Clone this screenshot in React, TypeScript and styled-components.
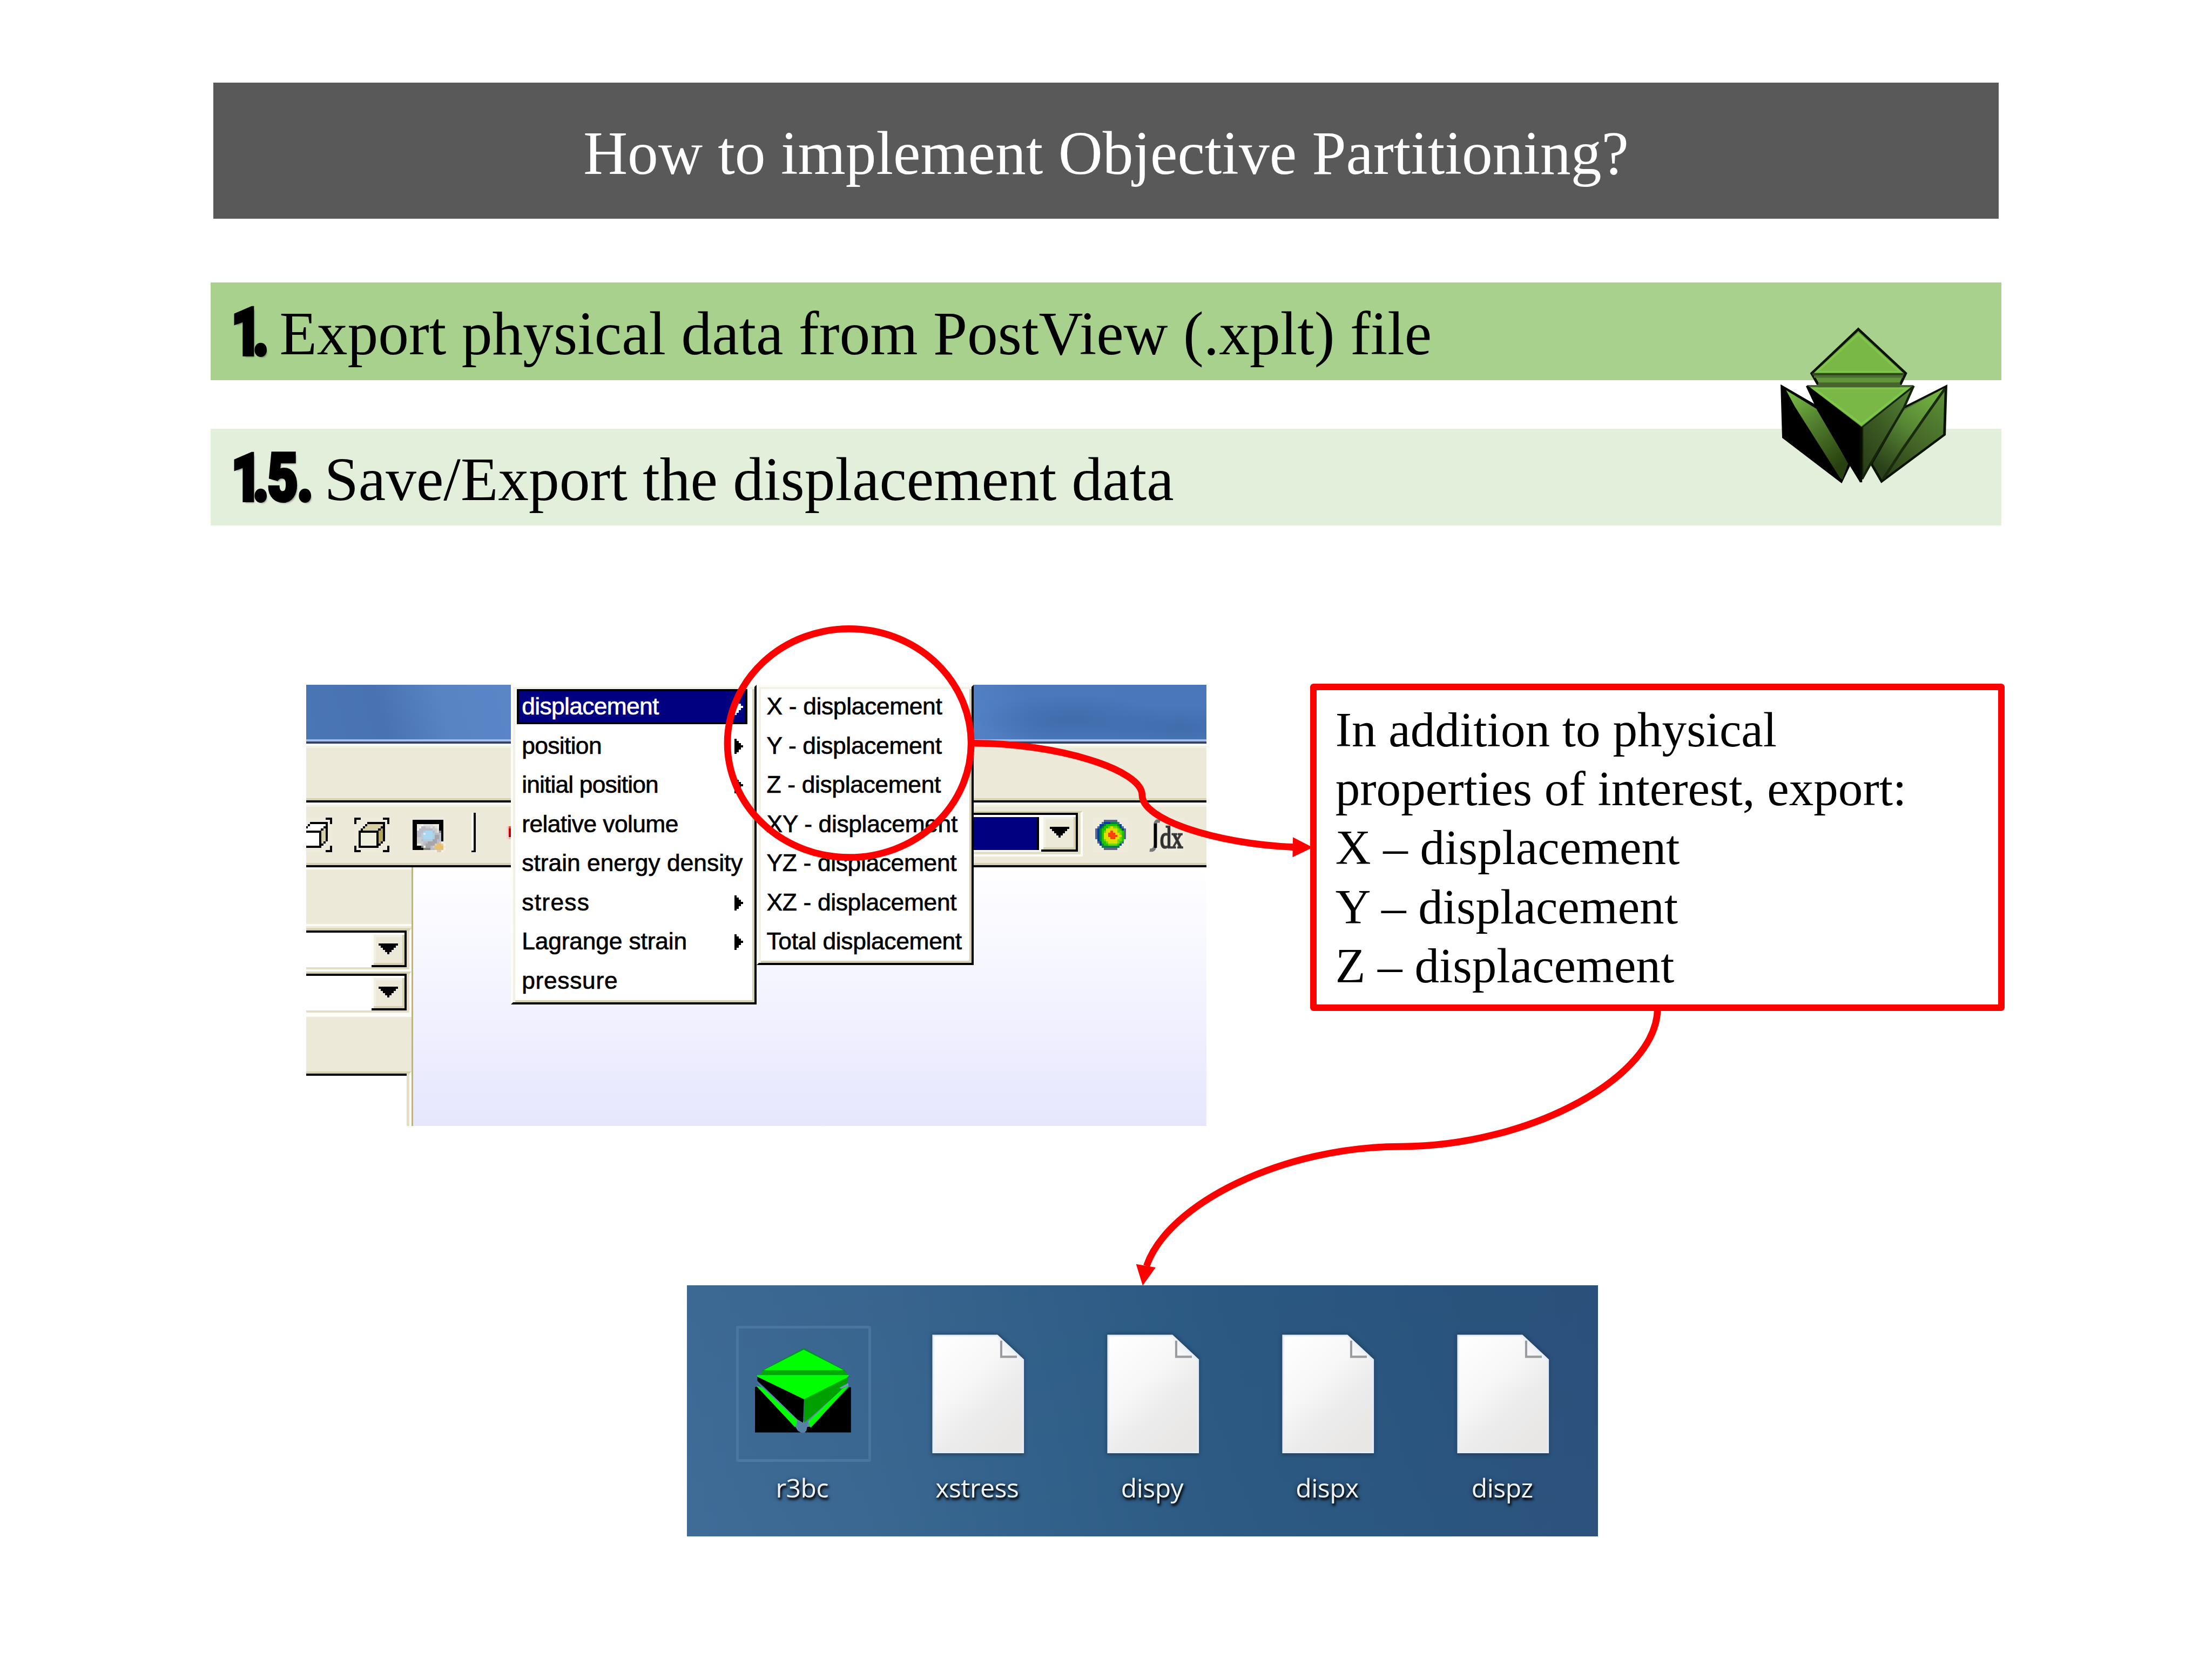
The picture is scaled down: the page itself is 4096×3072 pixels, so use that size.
import React from "react";
import styled, { createGlobalStyle } from "styled-components";

/* The slide is authored on a 6000 x 4500 grid and shown in a 4096px wide window. */
const u = (n: number) => `${Math.round(((n * 4096) / 6000) * 100) / 100}px`;

const RED = "#ff0000";
const FACE = "#ece9d8";
const TAN = "#d8d1b0";
const PALE = "#f3f1e5";

const Global = createGlobalStyle`
  html, body { margin: 0; background: #fff; }
`;

const Slide = styled.main`
  position: relative;
  box-sizing: border-box;
  width: ${u(6000)};
  height: ${u(4500)};
  padding: ${u(224)} ${u(571.5)} 0;
  overflow: hidden;
  background: #fff;
  color: #000;
  font-family: "Liberation Serif", "Times New Roman", serif;
  display: flex;
  flex-direction: column;
`;

const Title = styled.h1`
  box-sizing: border-box;
  height: ${u(369)};
  margin: 0 ${u(7.5)};
  padding-top: ${u(17)};
  background: #595959;
  color: #fff;
  font-size: ${u(166.3)};
  font-weight: 400;
  display: flex;
  align-items: center;
  justify-content: center;
  white-space: nowrap;
`;

const Step = styled.section<{ $tone: string; $gap: number; $height: number }>`
  box-sizing: border-box;
  height: ${(p) => u(p.$height)};
  margin-top: ${(p) => u(p.$gap)};
  padding: ${u(16)} 0 0 ${u(56)};
  background: ${(p) => p.$tone};
  font-size: ${u(166.3)};
  display: flex;
  align-items: center;
  white-space: nowrap;
`;

const StepNumber = styled.span<{ $width: number }>`
  width: ${(p) => u(p.$width)};
  flex: none;
  font-family: Roboto, "Liberation Sans", sans-serif;
  font-weight: 900;
  font-size: ${u(179)};
  line-height: 1;
  -webkit-text-stroke: ${u(9)} #000;
  text-shadow: ${u(5)} ${u(6)} ${u(5)} rgba(0, 0, 0, 0.4);
  transform-origin: 0 50%;
  transform: translateY(${u(-4)}) scaleX(0.8);
`;

const Glyph = styled.span<{ $track: number }>`
  letter-spacing: ${(p) => u(p.$track)};
`;

const Row = styled.div`
  display: flex;
  align-items: flex-start;
  margin: ${u(429.8)} ${u(-9)} 0 ${u(259.2)};
`;

/* ---------- PostView window ---------- */

const Window = styled.div`
  position: relative;
  width: ${u(2441.5)};
  height: ${u(1196.4)};
  margin-top: ${u(3)};
  flex: none;
  overflow: hidden;
  display: flex;
  flex-direction: column;
  font-family: "Liberation Sans", Arial, sans-serif;
`;

const TitleBar = styled.div`
  box-sizing: border-box;
  height: ${u(159)};
  flex: none;
  border-bottom: ${u(6)} solid #344468;
  box-shadow: inset 0 ${u(-6)} 0 #a9bfe2;
  background:
    radial-gradient(ellipse ${u(260)} ${u(70)} at 85% 62%, rgba(56, 100, 160, 0.6), transparent),
    radial-gradient(ellipse ${u(240)} ${u(60)} at 97% 75%, rgba(56, 100, 160, 0.55), transparent),
    linear-gradient(75deg, #4b76b6 0, #4872b2 9%, #5984c4 16%, #5a85c6 24%, #5280c4 74%, #4b78bc 80%, #4a77bb 100%);
`;

const MenuBar = styled.div`
  box-sizing: border-box;
  height: ${u(159.5)};
  flex: none;
  background: ${FACE};
  border-top: ${u(6)} solid #fdfdf8;
  border-bottom: ${u(6)} solid #000;
  box-shadow: inset 0 ${u(6)} 0 ${PALE}, inset 0 ${u(-6)} 0 ${TAN};
`;

const ToolBar = styled.div`
  box-sizing: border-box;
  height: ${u(176.7)};
  flex: none;
  background: ${FACE};
  border-top: ${u(6)} solid #fdfdf8;
  border-bottom: ${u(6)} solid #000;
  box-shadow: inset 0 ${u(6)} 0 ${PALE}, inset 0 ${u(-6)} 0 ${TAN};
  display: flex;
  align-items: flex-start;
  justify-content: space-between;
`;

const ToolGroup = styled.div<{ $indent?: number; $tail?: number }>`
  display: flex;
  align-items: flex-start;
  margin-left: ${(p) => u(p.$indent ?? 0)};
  padding-right: ${(p) => u(p.$tail ?? 0)};
`;

const PixelIcon = styled.svg<{ $left: number }>`
  display: block;
  width: ${u(95.2)};
  height: ${u(94)};
  margin: ${u(35)} 0 0 ${(p) => u(p.$left)};
  background: #eeebdd;
  overflow: visible;
`;

const Separator = styled.div`
  box-sizing: border-box;
  width: ${u(11)};
  height: ${u(106)};
  margin: ${u(23)} 0 0 ${u(70.5)};
  background: #fdfdf8;
  border-right: ${u(6)} solid #000;
  border-bottom: ${u(5)} solid #000;
`;

const RedTip = styled.div`
  box-sizing: border-box;
  width: ${u(12)};
  height: ${u(35)};
  margin: ${u(59)} 0 0 ${u(83)};
  background: linear-gradient(#e85030 0 18%, #c80000 18% 55%, #b40000 55% 84%, #d4c0bc 84%);
  border-left: ${u(6)} solid #f3d2d0;
`;

const ToolCombo = styled.div`
  box-sizing: border-box;
  width: ${u(295)};
  height: ${u(123)};
  margin-top: ${u(18)};
  border-top: ${u(5)} solid ${TAN};
  border-right: ${u(6)} solid #fdfdf8;
  border-bottom: ${u(6)} solid #fdfdf8;
  background: #e3dec8;
  display: flex;
`;

const ComboBody = styled.div<{ $width: number; $height: number }>`
  box-sizing: border-box;
  width: ${(p) => u(p.$width)};
  height: ${(p) => u(p.$height)};
  border-top: ${u(6)} solid #000;
  background: #fff;
  display: flex;
  justify-content: flex-end;
`;

const Selection = styled.div`
  box-sizing: border-box;
  flex: 1;
  margin: ${u(6)} ${u(6)} ${u(5)} 0;
  background: #000080;
  border-right: ${u(6)} solid #000;
`;

const DropButton = styled.div<{ $width: number }>`
  box-sizing: border-box;
  width: ${(p) => u(p.$width)};
  border-right: ${u(6)} solid #000;
  border-bottom: ${u(6)} solid #000;
  background: ${FACE};
  box-shadow: inset ${u(6)} ${u(6)} 0 #fdfdf8, inset ${u(-6)} ${u(-6)} 0 ${TAN}, inset ${u(12)} ${u(12)} 0 ${PALE};
  display: flex;
  align-items: center;
  justify-content: center;
`;

const DownMark = styled.svg`
  display: block;
  width: ${u(53)};
  height: ${u(29.5)};
  margin-left: ${u(4)};
`;

const Workspace = styled.div`
  flex: 1;
  display: flex;
  min-height: 0;
`;

const SideBar = styled.div`
  box-sizing: border-box;
  width: ${u(289.6)};
  flex: none;
  border-right: ${u(5.5)} solid #bcb487;
  background: ${FACE};
  display: flex;
  flex-direction: column;
`;

const SideBlank = styled.div<{ $height: number }>`
  box-sizing: border-box;
  height: ${(p) => u(p.$height)};
  flex: none;
  border-top: ${u(6)} solid #fdfdf8;
`;

const SideField = styled.div`
  box-sizing: border-box;
  height: ${u(117.2)};
  flex: none;
  background: #e3dec8;
  border-right: ${u(6)} solid #fdfdf8;
  border-top: ${u(6)} solid ${TAN};
  border-bottom: ${u(6)} solid #fdfdf8;
`;

const SideList = styled.div`
  box-sizing: border-box;
  flex: 1;
  background: #fff;
  border-top: ${u(6)} solid ${TAN};
  border-right: ${u(6)} solid #fdfdf8;
  display: flex;
`;

const SideListFill = styled.div`
  flex: 1;
  border-top: ${u(6)} solid #000;
`;

const SideListEdge = styled.div`
  width: ${u(6.5)};
  background: #e3dec8;
`;

const Viewport = styled.div`
  flex: 1;
  background: linear-gradient(#ffffff 0, #fdfdff 8%, #f3f3ff 50%, #e6e6fe 100%);
`;

const Menu = styled.ul<{ $left: number; $width: number; $height: number }>`
  position: absolute;
  top: 0;
  left: ${(p) => u(p.$left)};
  box-sizing: border-box;
  width: ${(p) => u(p.$width)};
  height: ${(p) => u(p.$height)};
  margin: 0;
  padding: 0;
  list-style: none;
  background: #fff;
  border-style: solid;
  border-width: ${u(6)};
  border-color: #fdfdf8 #000 #000 #fdfdf8;
  box-shadow: inset ${u(6)} ${u(6)} 0 ${PALE}, inset ${u(-6)} ${u(-6)} 0 ${TAN};
`;

const MenuItem = styled.li<{ $active?: boolean; $pad: number; $track: number }>`
  box-sizing: border-box;
  height: ${u(94.8)};
  margin: ${u(6)} ${u(18.5)} ${u(11.4)} ${u(10.7)};
  padding: 0 ${u(6)} ${u(1.5)} ${(p) => u(p.$pad)};
  border: ${u(6)} solid ${(p) => (p.$active ? "#000" : "transparent")};
  background: ${(p) => (p.$active ? "#000080" : "transparent")};
  background-clip: padding-box;
  color: ${(p) => (p.$active ? "#fff" : "#000")};
  font-size: ${u(65)};
  letter-spacing: ${(p) => u(p.$track)};
  -webkit-text-stroke: ${u(1)} currentColor;
  display: flex;
  align-items: center;
  justify-content: space-between;
  white-space: nowrap;
  & + & { margin-top: 0; }
`;

const SubMark = styled.svg`
  display: block;
  flex: none;
  width: ${u(23)};
  height: ${u(42)};
  margin-top: ${u(4)};
`;

/* ---------- Note ---------- */

const Note = styled.div`
  box-sizing: border-box;
  width: ${u(1884.5)};
  height: ${u(887.2)};
  margin-left: auto;
  flex: none;
  padding: ${u(27)} 0 0 ${u(51.5)};
  border: ${u(19)} solid ${RED};
  border-radius: ${u(9)};
  background: #fff;
  font-size: ${u(133.5)};
  line-height: ${u(160.2)};
  white-space: nowrap;
`;

/* ---------- Desktop ---------- */

const Desktop = styled.div`
  box-sizing: border-box;
  width: ${u(2470.8)};
  height: ${u(681)};
  margin: ${u(431.7)} 0 0 ${u(1291.7)};
  padding-left: ${u(77)};
  flex: none;
  display: flex;
  background:
    linear-gradient(180deg, rgba(40, 80, 120, 0.12), rgba(70, 120, 160, 0.06)),
    linear-gradient(97deg, #3f6c98 0, #3a6791 22%, #31608a 40%, #2b5982 58%, #29547d 80%, #2b507b 100%);
`;

const DesktopItem = styled.div`
  width: ${u(474.8)};
  flex: none;
  display: flex;
  flex-direction: column;
  align-items: center;
  padding-top: ${u(110.8)};
`;

const IconSlot = styled.div<{ $framed?: boolean }>`
  box-sizing: border-box;
  width: ${u(366)};
  height: ${u(368.5)};
  margin-left: ${u(3)};
  border: ${u(8)} solid ${(p) => (p.$framed ? "rgba(96, 138, 178, 0.42)" : "transparent")};
  border-radius: ${u(6)};
  display: flex;
  justify-content: center;
  align-items: flex-start;
`;

const PageArt = styled.svg`
  display: block;
  width: ${u(262)};
  height: ${u(337)};
  margin: ${u(8)} ${u(5)} 0 0;
  overflow: visible;
`;

const GemArt = styled.svg`
  display: block;
  width: ${u(268)};
  height: ${u(237.3)};
  margin: ${u(48)} 0 0 ${u(3)};
  overflow: visible;
`;

const FileName = styled.span`
  margin: ${u(20.5)} 0 0 ${u(-4)};
  font-family: "Open Sans", "Noto Sans", sans-serif;
  font-size: ${u(70.5)};
  line-height: ${u(100)};
  letter-spacing: ${u(-0.8)};
  color: #eef2f4;
  text-shadow: ${u(3)} ${u(6)} ${u(6)} #000, 0 ${u(3)} ${u(12)} rgba(0, 0, 0, 0.7);
`;

/* ---------- Overlays ---------- */

const Logo = styled.svg`
  position: absolute;
  left: ${u(4822.4)};
  top: ${u(886.4)};
  width: ${u(464.3)};
  height: ${u(426.7)};
`;

const Markup = styled.svg`
  position: absolute;
  left: 0;
  top: 0;
  width: ${u(6000)};
  height: ${u(4500)};
`;

const CubeIcon = ({ left, front, top, side }: { left: number; front: string; top: string; side: string }) => (
  <PixelIcon $left={left} viewBox="0 0 16 16" preserveAspectRatio="none" shapeRendering="crispEdges">
    <path fill="#000" d="M0 0h3v1H1v2H0zM13 0h3v3h-1V1h-2zM0 13h1v2h2v1H0zM15 13h1v3h-3v-1h2z" />
    <path fill={top} d="M6 3h7v1h-1v1h-1v1H4V5h1V4h1z" />
    <path fill={side} d="M11 6h1V5h1v6h-1v1h-1z" />
    <path fill="#000" d="M6 2h8v9h-1v1h-1v1h-1v1H2V6h1V5h1V4h1V3h1zM6 3v1H5v1H4v1h6.9V5H12V4h1V3zM11 6v6h1v-1h1V5h-1v1zM3 7v6h7V7z" fillRule="evenodd" />
    <path fill={front} d="M3 7h7v6H3z" />
  </PixelIcon>
);

const ZoomIcon = () => (
  <PixelIcon $left={58.2} viewBox="0 0 16 16" preserveAspectRatio="none" shapeRendering="crispEdges">
    <path fill="#000" d="M1 1h14v10h-1V6h-1V3H3v10h3v2H1z" />
    <path fill="#848484" d="M5 13h1v1h4v1H6v-1H5zM13 6h1v2h-1z" />
    <path fill="#dfdfde" d="M6 3h4v1h2v1h1v2h-3V5H6z" />
    <path fill="#c9cecd" d="M3 6h2v6H3zM7 4h2v1H7zM10 4h1v1h1v2h-2zM5 11h2v2H5z" />
    <path fill="#bcbcc6" d="M5 4h2v1h3v1h1v1h3v4h-1v2h-2v2h-2v-2H6v-2H5V9H3V6h1V5h1z" />
    <path fill="#a6a6aa" d="M10 8h3v2h-1v2h-1v1H9v1H7v-2h1v-1h2z" />
    <path fill="#b3ced8" d="M5 7h1V6h4v1h1v3h-1v1H6v-1H5z" />
    <path fill="#aad8f0" d="M6 7h1V6h3v4H6z" />
    <path fill="#d8e8f6" d="M6 7h1v1H6z" />
    <path fill="#d8cbbc" d="M13 11h1v1h1v1h-4v-1h2zM11 13v1h-1v-1zM12 15h2v1h-2z" />
    <path fill="#e8c170" d="M12 12h2v1h1v2h-4v-2h1z" />
    <path fill="#f6f1ec" d="M14 11h1v1h1v1h-1v-1h-1zM15 14h1v1h-1zM11 15h1v1h-1zM14 15h1v1h-1zM5 3h1v1H5zM4 4h1v1H4zM3 5h1v1H3z" />
  </PixelIcon>
);

const ColorMapIcon = () => (
  <PixelIcon $left={29} viewBox="0 0 16 16" preserveAspectRatio="none" shapeRendering="crispEdges">
    <path fill="#5c6684" d="M5 1h6v1h1v1h1v1h1v1h1v5h-1v2h-1v1h-1v1h-1v1H5v-1H4v-1H3v-1H2v-2H1V5h1V4h1V3h1V2h1z" />
    <path fill="#07409a" d="M5 2h6v1h2v2h1v6h-1v2h-2v1H5v-1H3v-2H2V5h1V3h2z" />
    <path fill="#0a8048" d="M5 3h3V2h3v1h1v2h1v7h-1v2H4v-3H3V5h1V4h1z" />
    <path fill="#1fc400" d="M6 3h5v1h1v1h1v1h1v5h-1v1h-1v1H5v-1H4v-2H4V5h1V4h1z" />
    <path fill="#66dc00" d="M6 5h1V4h4v1h1v1h1v5h-1v1h-1v1H7v-1H6v-1H5V6h1z" />
    <path fill="#dede00" d="M6 5h2V4h1v1h2v2h1v1h1v1h-1v1h-1v2H7v-1H6v-1H5V7h1z" />
    <path fill="#fb4208" d="M8 6h1v1h1v1h1v1h-1v1H8V9H7V7h1z" />
  </PixelIcon>
);

const IntegralIcon = () => (
  <PixelIcon $left={57.4} viewBox="0 0 95.2 94" preserveAspectRatio="none">
    <path d="M28 11c-9-4-13-1-13 10v48c0 14-4 21-15 19" fill="none" stroke="#777" strokeWidth="9" />
    <path d="M15.500 16v66" stroke="#000" strokeWidth="8" />
    <text x="28" y="82" fontFamily="Liberation Serif" fontSize="84" fill="#222" stroke="#3c3c3c" strokeWidth="4" textLength="62" lengthAdjust="spacingAndGlyphs">dx</text>
  </PixelIcon>
);

const DropMark = () => (
  <DownMark viewBox="0 0 9 5" preserveAspectRatio="none" shapeRendering="crispEdges">
    <path d="M0 0h9v1H8v1H7v1H6v1H5v1H4V4H3V3H2V2H1V1H0z" />
  </DownMark>
);

const SubMenuMark = ({ color }: { color: string }) => (
  <SubMark viewBox="0 0 4 7" preserveAspectRatio="none" shapeRendering="crispEdges">
    <path fill={color} d="M0 0h1v1h1v1h1v1h1v1H3v1H2v1H1v1H0z" />
  </SubMark>
);

const fields = [
  { label: "displacement", sub: true, track: -0.95 },
  { label: "position", sub: true, track: -0.95 },
  { label: "initial position", sub: true, track: -1.25 },
  { label: "relative volume", sub: false, track: -0.85 },
  { label: "strain energy density", sub: false, track: 0 },
  { label: "stress", sub: true, track: 1.9 },
  { label: "Lagrange strain", sub: true, track: -0.25 },
  { label: "pressure", sub: false, track: 1 },
];

const components = [
  "X - displacement",
  "Y - displacement",
  "Z - displacement",
  "XY - displacement",
  "YZ - displacement",
  "XZ - displacement",
  "Total displacement",
];

const PostViewWindow = () => (
  <Window>
    <TitleBar />
    <MenuBar />
    <ToolBar>
      <ToolGroup $indent={-24.4}>
        <CubeIcon left={0} front="#fff" top="#fff" side="#d6cfa6" />
        <CubeIcon left={59} front="#eeefdd" top="#d6cfa6" side="#b3a45a" />
        <ZoomIcon />
        <Separator />
        <RedTip />
      </ToolGroup>
      <ToolGroup $tail={59}>
        <ToolCombo>
          <ComboBody $width={283} $height={106}>
            <Selection />
            <DropButton $width={100}>
              <DropMark />
            </DropButton>
          </ComboBody>
        </ToolCombo>
        <ColorMapIcon />
        <IntegralIcon />
      </ToolGroup>
    </ToolBar>
    <Workspace>
      <SideBar>
        <SideBlank $height={153} />
        <SideBlank $height={12} />
        {[0, 1].map((i) => (
          <SideField key={i}>
            <ComboBody $width={271.7} $height={99.4}>
              <DropButton $width={95}>
                <DropMark />
              </DropButton>
            </ComboBody>
          </SideField>
        ))}
        <SideBlank $height={153.3} />
        <SideList>
          <SideListFill />
          <SideListEdge />
        </SideList>
      </SideBar>
      <Viewport />
    </Workspace>
    <Menu $left={555.3} $width={666} $height={866}>
      {fields.map((f, i) => (
        <MenuItem key={f.label} $active={i === 0} $pad={7} $track={f.track}>
          {f.label}
          {f.sub && <SubMenuMark color={i === 0 ? "#fff" : "#000"} />}
        </MenuItem>
      ))}
    </Menu>
    <Menu $left={1221.3} $width={589} $height={760}>
      {components.map((c) => (
        <MenuItem key={c} $pad={5} $track={-0.5}>
          {c}
        </MenuItem>
      ))}
    </Menu>
  </Window>
);

const Page = () => (
  <PageArt viewBox="0 0 265 337" preserveAspectRatio="none">
    <defs>
      <linearGradient id="sheet" x1="0" y1="0" x2="0.7" y2="1">
        <stop offset="0" stopColor="#ffffff" />
        <stop offset="0.45" stopColor="#f7f7f8" />
        <stop offset="0.7" stopColor="#ececed" />
        <stop offset="1" stopColor="#e9e7e5" />
      </linearGradient>
      <linearGradient id="fold" x1="0" y1="1" x2="1" y2="0">
        <stop offset="0" stopColor="#ffffff" />
        <stop offset="1" stopColor="#dfe4e8" />
      </linearGradient>
      <filter id="sheetShadow" x="-20%" y="-20%" width="140%" height="140%">
        <feGaussianBlur stdDeviation="5" />
      </filter>
    </defs>
    <path d="M6 6H188L260 72V334H6Z" fill="#1d3450" opacity="0.75" filter="url(#sheetShadow)" />
    <path d="M10.500 10.500H186L257 76V327H10.500Z" fill="url(#sheet)" stroke="#e3eefa" strokeWidth="5" />
    <path d="M186 9L196 66L255 78Z" fill="url(#fold)" />
    <path d="M197 24V68H240" fill="none" stroke="#9a9ca0" strokeWidth="6" />
  </PageArt>
);

const Gem = () => (
  <GemArt viewBox="384 270 700 620" preserveAspectRatio="none">
    <path fill="#6f9db8" d="M400 520L720 800H745L1050 540L760 880H705Z" opacity="0.7" />
    <path fill="#0b8a35" d="M733 280L1035 445H430Z" />
    <path fill="#00ff00" d="M733 294L1015 438H450Z" />
    <path fill="#00a800" d="M450 440H1015L1045 472H425Z" />
    <path fill="#00a000" d="M735 640L1045 490L1038 545L770 785L735 812Z" />
    <path fill="#000" d="M405 485L735 640L728 812L690 790L455 560L405 515Z" />
    <path fill="#00ff00" d="M402 474H1056L1040 492L735 645L405 485Z" />
    <path fill="#000" d="M388 560L400 555L675 840L690 868L715 880H388Z" />
    <path fill="#000" d="M1068 560L1055 560L780 840H758L752 868L740 880H1068Z" />
    <path fill="#00ff00" d="M396 548L440 564L690 798L672 844Z" />
    <path fill="#00ff00" d="M1056 548L1010 568L766 803L782 848Z" />
    <path fill="#6f9db8" d="M1048 530L985 565L1000 570L1050 548Z" />
    <path fill="#5681a6" d="M684 795L733 815L770 785L750 868L740 880H712L692 865Z" />
  </GemArt>
);

const files = [
  { name: "r3bc", gem: true },
  { name: "xstress" },
  { name: "dispy" },
  { name: "dispx" },
  { name: "dispz" },
];

const PostViewLogo = () => (
  <Logo viewBox="240 95 910 1115" preserveAspectRatio="none">
    <defs>
      <linearGradient id="wingLeft" x1="0" y1="0" x2="0.6" y2="1">
        <stop offset="0" stopColor="#7dc248" />
        <stop offset="0.45" stopColor="#54822f" />
        <stop offset="1" stopColor="#28400f" />
      </linearGradient>
      <linearGradient id="wingRight" x1="0.9" y1="0" x2="0.3" y2="1">
        <stop offset="0" stopColor="#76b644" />
        <stop offset="0.5" stopColor="#568634" />
        <stop offset="1" stopColor="#2a4018" />
      </linearGradient>
      <linearGradient id="wingFar" x1="0.9" y1="0" x2="0.3" y2="1">
        <stop offset="0" stopColor="#5d9138" />
        <stop offset="0.55" stopColor="#456728" />
        <stop offset="1" stopColor="#2a4016" />
      </linearGradient>
      <linearGradient id="frontRight" x1="0.9" y1="0" x2="0.1" y2="1">
        <stop offset="0" stopColor="#568434" />
        <stop offset="0.5" stopColor="#3d5c24" />
        <stop offset="1" stopColor="#283c16" />
      </linearGradient>
    </defs>
    <path d="M668 112L920 425L893 500H452L420 425Z" fill="#62943a" stroke="#0c1205" strokeWidth="15" />
    <path d="M668 132L905 422H432Z" fill="#79b846" />
    <path d="M668 148L888 415H448Z" fill="none" stroke="#7fc74b" strokeWidth="12" />
    <path d="M424 423H912V440H424Z" fill="#2f4819" />
    <path d="M432 440H905V457H432Z" fill="#4c702d" />
    <path d="M262 518L440 655L622 1068L577 1192L270 880Z" fill="#000" stroke="#000" strokeWidth="14" />
    <path d="M284 545L435 668L462 690L614 1065L583 1180L570 1165L330 660Z" fill="url(#wingLeft)" />
    <path d="M1134 518L905 672L738 1068L792 1192L1126 860Z" fill="url(#wingFar)" stroke="#0a1203" strokeWidth="14" />
    <path d="M1125 530L908 690L748 1060L792 1175Z" fill="url(#wingRight)" />
    <path d="M1128 535L1030 720L905 960L800 1175" fill="none" stroke="#1a2a0c" strokeWidth="15" />
    <path d="M395 515L455 685L620 1060L682 1195V800Z" fill="#000" stroke="#000" strokeWidth="12" />
    <path d="M688 805L962 515L912 665L735 1062L688 1175Z" fill="url(#frontRight)" stroke="#16240b" strokeWidth="13" />
    <path d="M682 800V1198" stroke="#080d04" strokeWidth="13" />
    <path d="M395 508H962L685 806Z" fill="#46682a" />
    <path d="M412 524H946L685 800Z" fill="#79b846" />
    <path d="M430 532H928L685 786Z" fill="none" stroke="#7fc74b" strokeWidth="13" />
    <path d="M455 491H890V525H455Z" fill="#46652a" />
  </Logo>
);

export default function App() {
  return (
    <>
      <Global />
      <Slide>
        <Title>How to implement Objective Partitioning?</Title>
        <Step $tone="#a9d18e" $gap={173} $height={264.6}>
          <StepNumber $width={130.5}>
            <Glyph $track={-30}>1</Glyph>
            <Glyph $track={0}>.</Glyph>
          </StepNumber>
          Export physical data from PostView (.xplt) file
        </Step>
        <Step $tone="#e2efda" $gap={132.6} $height={262}>
          <StepNumber $width={252.5}>
            <Glyph $track={-30}>1</Glyph>
            <Glyph $track={-5}>.</Glyph>
            <Glyph $track={-3}>5</Glyph>
            <Glyph $track={0}>.</Glyph>
          </StepNumber>
          Save/Export the displacement data
        </Step>
        <Row>
          <PostViewWindow />
          <Note>
            In addition to physical
            <br />
            properties of interest, export:
            <br />
            X – displacement
            <br />
            Y – displacement
            <br />
            Z – displacement
          </Note>
        </Row>
        <Desktop>
          {files.map((f) => (
            <DesktopItem key={f.name}>
              <IconSlot $framed={f.gem}>{f.gem ? <Gem /> : <Page />}</IconSlot>
              <FileName>{f.name}</FileName>
            </DesktopItem>
          ))}
        </Desktop>
        <PostViewLogo />
        <Markup viewBox="0 0 6000 4500" fill="none" stroke={RED} strokeWidth="18.500">
          <ellipse cx="2303.600" cy="2015.700" rx="330.500" ry="310" />
          <path d="M2640 2016C2866 2016 3098 2087 3098 2157C3098 2222.700 3295.700 2288.400 3508 2297.800" />
          <path d="M3507 2270.700L3561 2298.800L3506 2325Z" fill={RED} stroke="none" />
          <path d="M4496 2735C4496 2921.500 4147 3110 3798 3110C3483.900 3110 3169.800 3262.300 3110 3434" />
          <path d="M3081.600 3429L3134.700 3438L3099.500 3487Z" fill={RED} stroke="none" />
        </Markup>
      </Slide>
    </>
  );
}
